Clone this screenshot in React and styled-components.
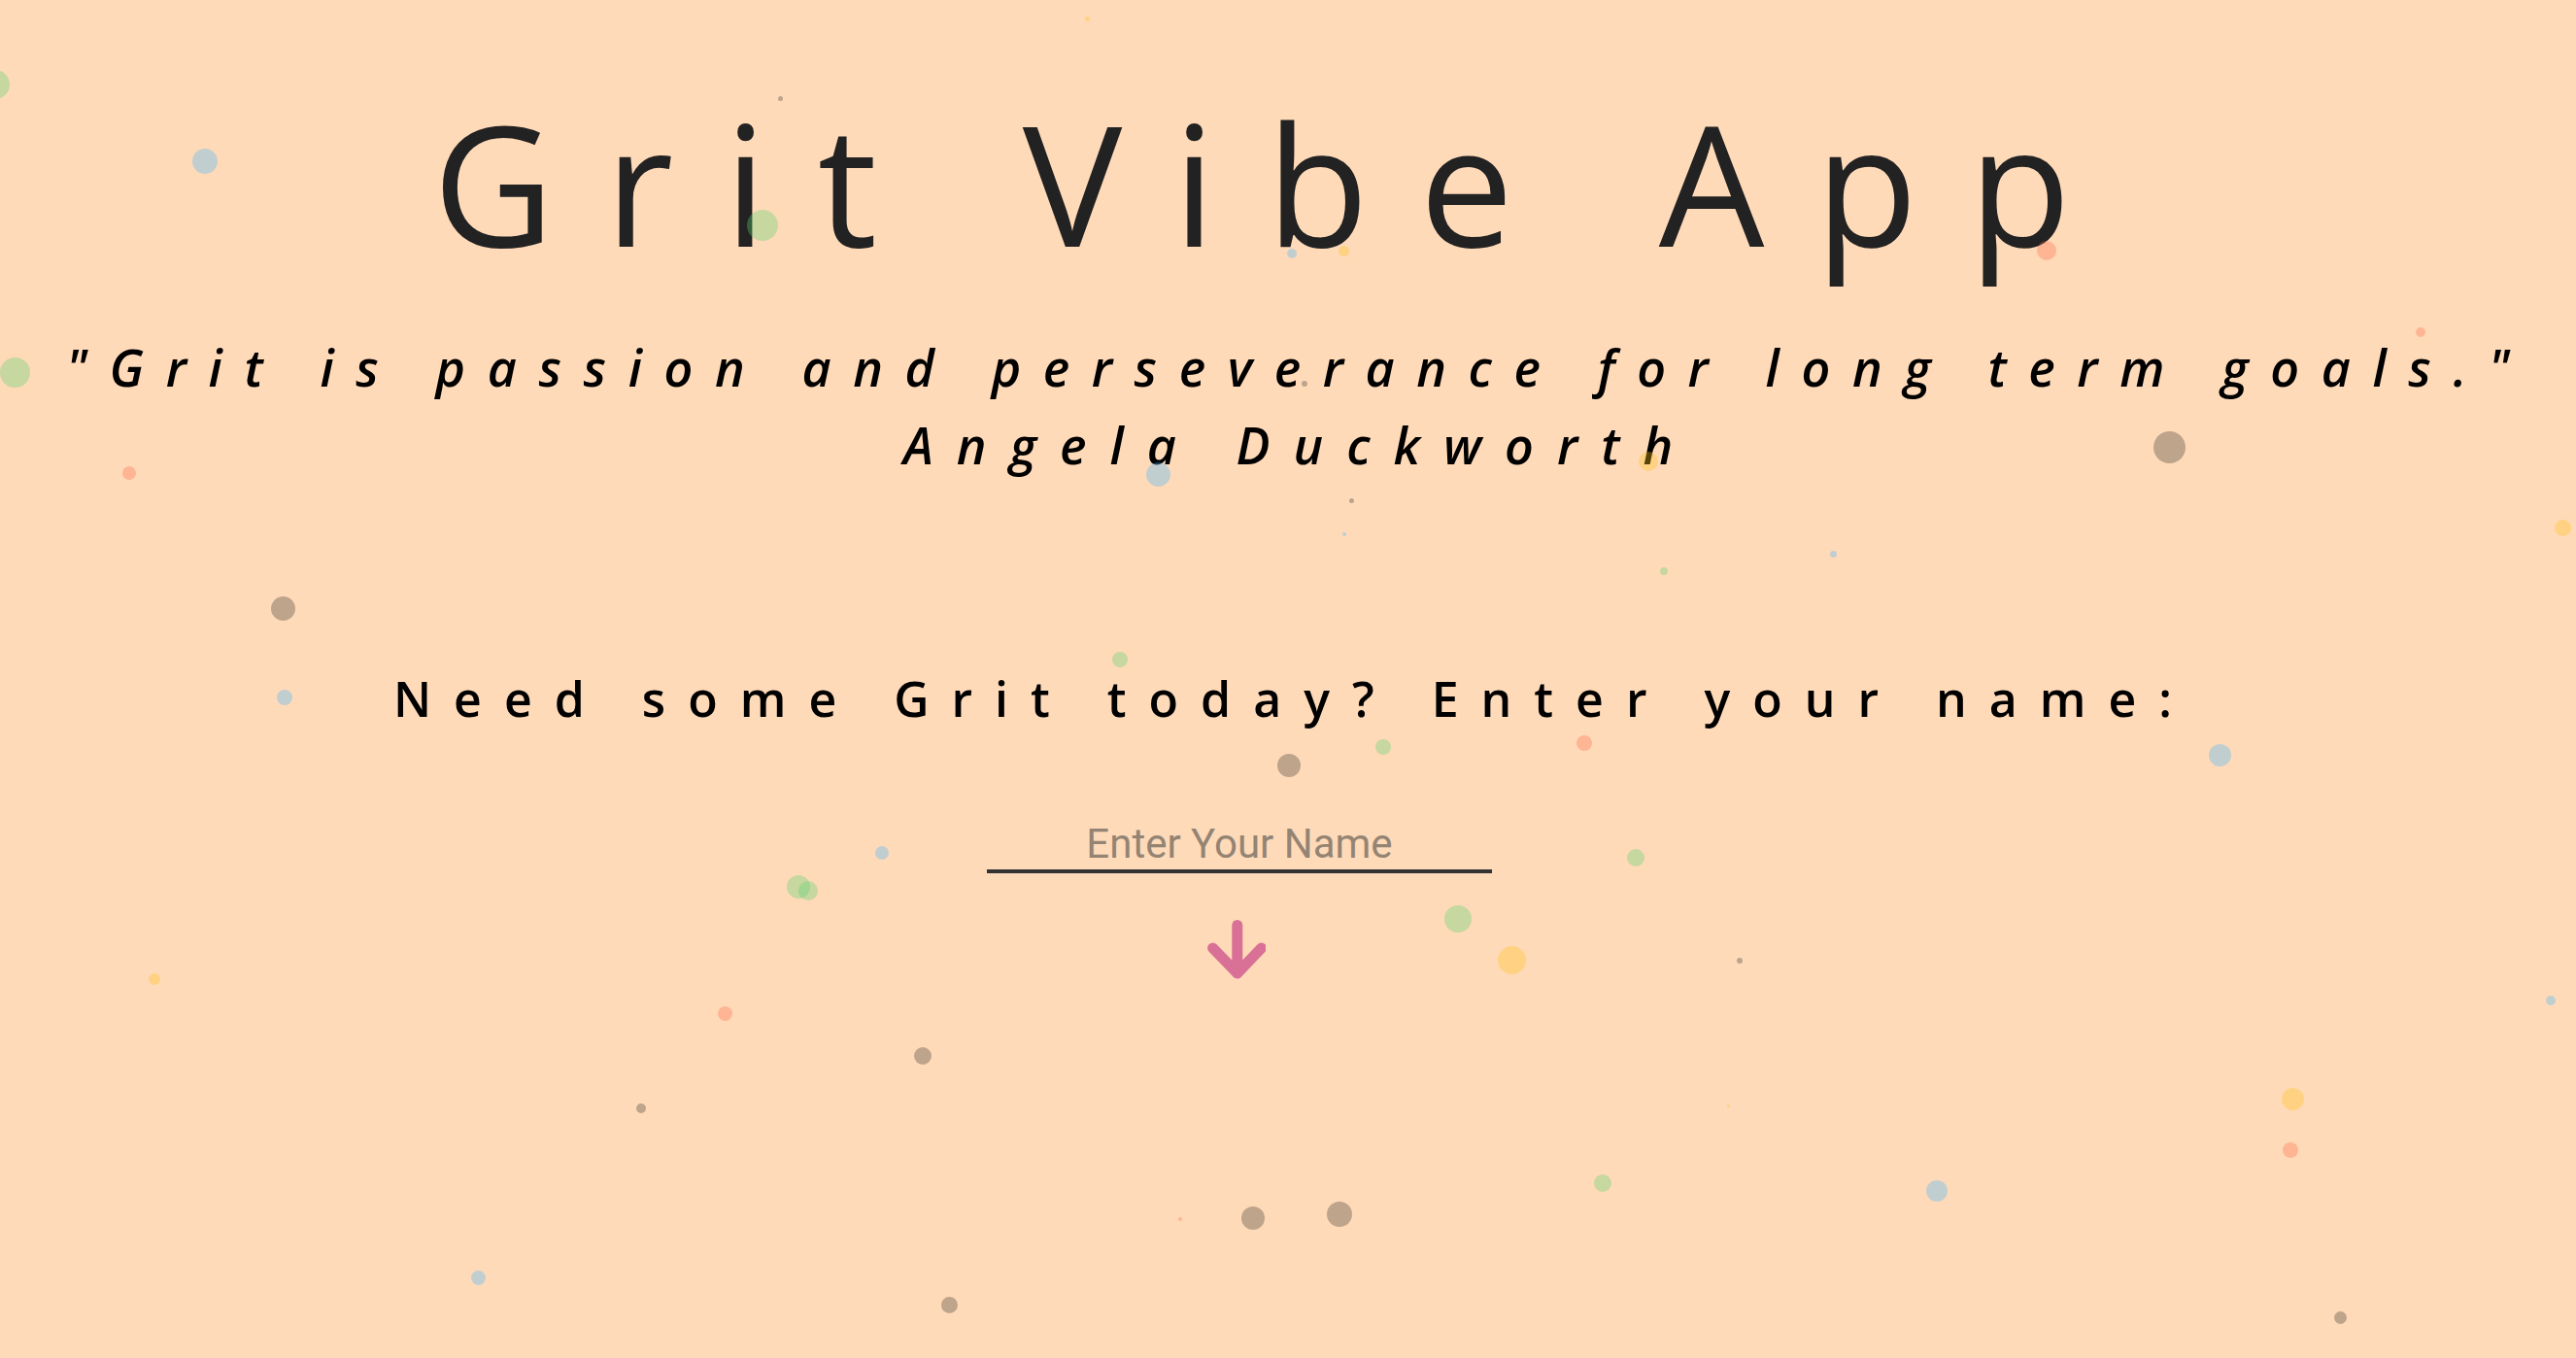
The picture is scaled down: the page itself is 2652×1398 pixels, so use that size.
import React from 'react';
import styled, { createGlobalStyle } from 'styled-components';

const GlobalStyle = createGlobalStyle`
  html, body {
    margin: 0;
    padding: 0;
    background: peachpuff;
  }
`;

const PALETTE = {
  green: 'rgba(93, 208, 114, 0.35)',
  blue: 'rgba(76, 183, 248, 0.35)',
  brown: 'rgba(67, 63, 51, 0.35)',
  orange: 'rgba(253, 111, 76, 0.35)',
  yellow: 'rgba(253, 194, 30, 0.35)',
};

// confetti particles: [x, y, diameter, colour]
const PARTICLES = [
  [-5, 87, 30, 'green'], [211, 166, 26, 'blue'], [803, 101, 5, 'brown'],
  [1119, 19, 5, 'yellow'], [785, 232, 32, 'green'], [1330, 261, 10, 'blue'],
  [1383, 258, 11, 'yellow'], [2107, 258, 20, 'orange'], [15, 383, 31, 'green'],
  [133, 487, 14, 'orange'], [1192, 488, 25, 'blue'], [1697, 475, 20, 'yellow'],
  [2233, 460, 33, 'brown'], [2492, 342, 10, 'orange'], [1343, 395, 6, 'brown'],
  [1391, 515, 5, 'brown'], [1384, 550, 4, 'blue'], [2638, 543, 17, 'yellow'],
  [1887, 570, 7, 'blue'], [1713, 588, 8, 'green'], [291, 626, 25, 'brown'],
  [1153, 679, 16, 'green'], [293, 718, 16, 'blue'], [1327, 788, 24, 'brown'],
  [1424, 769, 16, 'green'], [1631, 765, 16, 'orange'], [2285, 777, 23, 'blue'],
  [908, 878, 14, 'blue'], [1684, 883, 18, 'green'], [822, 913, 24, 'green'],
  [832, 917, 20, 'green'], [1501, 946, 28, 'green'], [1556, 988, 29, 'yellow'],
  [159, 1008, 12, 'yellow'], [1791, 989, 6, 'brown'], [2626, 1030, 10, 'blue'],
  [746, 1043, 15, 'orange'], [950, 1087, 18, 'brown'], [660, 1141, 10, 'brown'],
  [2360, 1131, 23, 'yellow'], [2358, 1184, 16, 'orange'], [1779, 1138, 3, 'yellow'],
  [1650, 1218, 18, 'green'], [1994, 1226, 22, 'blue'], [1290, 1254, 24, 'brown'],
  [1379, 1250, 26, 'brown'], [1215, 1255, 4, 'orange'], [492, 1315, 15, 'blue'],
  [977, 1343, 17, 'brown'], [2409, 1356, 13, 'brown'],
];

const Page = styled.div`
  position: relative;
  min-height: 100vh;
  overflow: hidden;
  background: peachpuff;
  display: flex;
  flex-direction: column;
  align-items: center;
  font-family: "Open Sans", "Liberation Sans", sans-serif;
`;

const Title = styled.h1`
  margin: 101px 0 0;
  padding-right: 22px;
  font-size: 172px;
  line-height: 1;
  font-weight: 500;
  letter-spacing: 52.5px;
  color: #222;
`;

const Quote = styled.p`
  margin: 79px 0 0;
  font-size: 52px;
  line-height: 1;
  font-style: italic;
  font-weight: 600;
  letter-spacing: ${(p) => p.$spacing}px;
  padding-left: ${(p) => p.$spacing}px;
  color: #000;
`;

const Author = styled(Quote)`
  margin-top: 28px;
`;

const Prompt = styled.h2`
  margin: 210px 0 0;
  padding-left: 12px;
  font-size: 50px;
  line-height: 1;
  font-weight: 600;
  letter-spacing: 23px;
  color: #000;
`;

const Form = styled.form`
  margin-top: 100px;
  padding-right: 100px;
  display: flex;
  flex-direction: column;
  align-items: center;
  gap: 48px;
`;

const NameInput = styled.input`
  width: 520px;
  height: 49px;
  padding: 0 0 2px;
  border: none;
  border-bottom: 4px solid #333;
  background: transparent;
  outline: none;
  text-align: center;
  font-family: Roboto, "Liberation Sans", sans-serif;
  font-size: 42px;
  line-height: 49px;
  color: #333;

  &::placeholder {
    color: #948473;
  }
`;

const ArrowButton = styled.button`
  width: 60px;
  height: 61px;
  margin-right: 6px;
  padding: 0;
  border: none;
  background: none;
  cursor: pointer;
  display: block;
`;

const Dot = styled.span`
  position: absolute;
  z-index: 2;
  border-radius: 50%;
  pointer-events: none;
  background: ${(p) => PALETTE[p.$color]};
`;

const ArrowDown = () => (
  <svg width="60" height="61" viewBox="0 0 60 61" fill="none">
    <g stroke="#d97095" strokeWidth="11" strokeLinecap="round" strokeLinejoin="round">
      <path d="M30.8 5.5V54.5" />
      <path d="M5.6 29L30.8 55L55.6 29" />
    </g>
  </svg>
);

export default function App() {
  return (
    <>
      <GlobalStyle />
      <Page>
        <Title>Grit Vibe App</Title>
        <Quote $spacing={22.6}>"Grit is passion and perseverance for long term goals."</Quote>
        <Author $spacing={24}>Angela Duckworth</Author>
        <Prompt>Need some Grit today? Enter your name:</Prompt>
        <Form onSubmit={(e) => e.preventDefault()}>
          <NameInput type="text" placeholder="Enter Your Name" />
          <ArrowButton type="submit" aria-label="Submit">
            <ArrowDown />
          </ArrowButton>
        </Form>
        {PARTICLES.map(([x, y, d, c], i) => (
          <Dot
            key={i}
            $color={c}
            style={{ left: x - d / 2, top: y - d / 2, width: d, height: d }}
          />
        ))}
      </Page>
    </>
  );
}
